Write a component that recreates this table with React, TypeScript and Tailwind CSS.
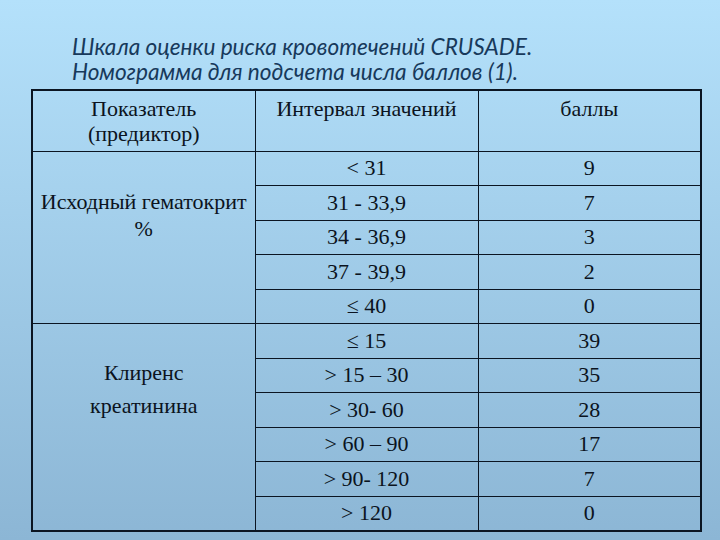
const groups = [
  {
    label: ["Исходный гематокрит", "%"],
    labelClass: "pt-[36px] leading-[27px]",
    rows: [
      ["< 31", "9"],
      ["31 - 33,9", "7"],
      ["34 - 36,9", "3"],
      ["37 - 39,9", "2"],
      ["≤ 40", "0"],
    ],
  },
  {
    label: ["Клиренс", "креатинина"],
    labelClass: "pt-[32px] leading-[33px]",
    rows: [
      ["≤ 15", "39"],
      ["> 15 – 30", "35"],
      ["> 30- 60", "28"],
      ["> 60 – 90", "17"],
      ["> 90- 120", "7"],
      ["> 120", "0"],
    ],
  },
];

const App = () => {
  return (
    <div className="w-[720px] h-[540px] overflow-hidden bg-gradient-to-b from-[#b4e1fb] to-[#8cb6d5]">
      {/* Title */}
      <div className="pl-[72px] pt-[34px] font-['Lato',sans-serif] italic text-[22.6px] leading-[25px] text-[#17395b]">
        <div>Шкала оценки риска кровотечений CRUSADE.</div>
        <div>Номограмма для подсчета числа баллов (1).</div>
      </div>

      {/* Table */}
      <table className="ml-[31px] mt-[5px] border-collapse border-2 border-[#0b1522] table-fixed w-[669px] font-['Liberation_Serif',serif] text-[22px] text-[#0b1320]">
        <colgroup>
          <col className="w-[223px]" />
          <col className="w-[223px]" />
          <col className="w-[223px]" />
        </colgroup>
        <thead>
          <tr className="h-[61px]">
            <th className="border border-[#0b1522] align-top font-normal pt-[5px] leading-[25px]">
              Показатель
              <br />
              (предиктор)
            </th>
            <th className="border border-[#0b1522] align-top font-normal pt-[5px] leading-[25px]">
              Интервал значений
            </th>
            <th className="border border-[#0b1522] align-top font-normal pt-[5px] leading-[25px]">
              баллы
            </th>
          </tr>
        </thead>
        <tbody>
          {groups.map((g) =>
            g.rows.map((r, i) => (
              <tr key={g.label[0] + i} className="h-[34.5px]">
                {i === 0 && (
                  <td
                    rowSpan={g.rows.length}
                    className={`border border-[#0b1522] align-top text-center ${g.labelClass}`}
                  >
                    {g.label[0]}
                    <br />
                    {g.label[1]}
                  </td>
                )}
                <td className="border border-[#0b1522] text-center leading-none">{r[0]}</td>
                <td className="border border-[#0b1522] text-center leading-none">{r[1]}</td>
              </tr>
            ))
          )}
        </tbody>
      </table>
    </div>
  );
};

export default App;
